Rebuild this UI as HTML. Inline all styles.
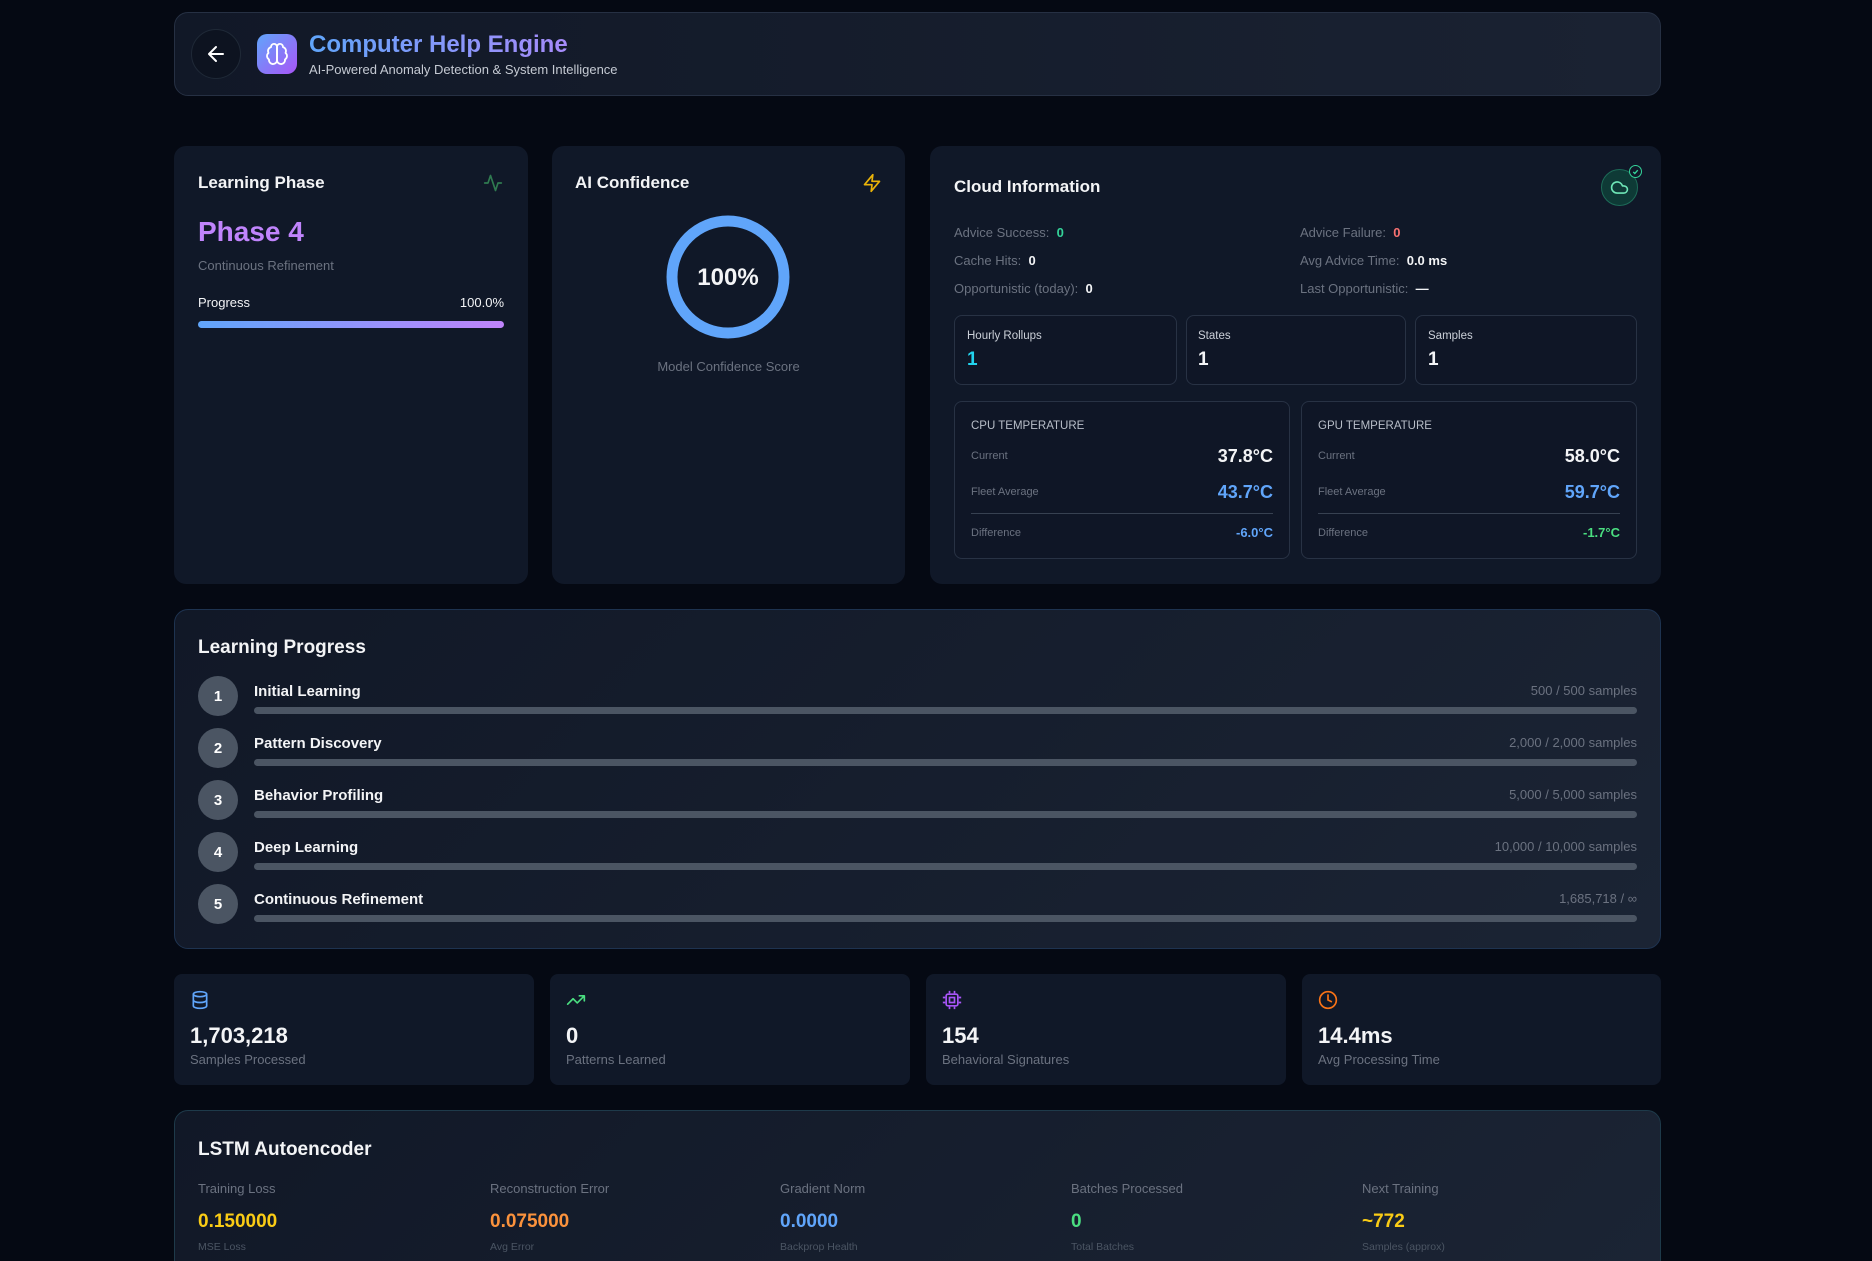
<!DOCTYPE html>
<html><head><meta charset="utf-8"><style>
*{box-sizing:border-box;margin:0;padding:0}
html{width:1872px;height:1261px;overflow:hidden;background:#050913}
body{width:1872px;height:1261px;overflow:hidden;background:#050913;font-family:"Liberation Sans",sans-serif;color:#f3f4f6;position:relative}
.a{position:absolute}
.card{position:absolute;background:#101828;border-radius:12px}
.t{position:absolute;white-space:nowrap;line-height:1}
.g{color:#6b7280}
.b{font-weight:700}
.mini{position:absolute;border:1px solid #283244;border-radius:8px;background:#0f1626}
.bar{position:absolute;height:7px;border-radius:4px;background:#4b5563}
.num{position:absolute;width:40px;height:40px;border-radius:50%;background:#4b5563;color:#fff;font-weight:700;font-size:15px;display:flex;align-items:center;justify-content:center}
</style></head><body>

<!-- header -->
<div class="a" style="left:174px;top:12px;width:1487px;height:84px;border-radius:14px;background:linear-gradient(90deg,#111827,#1a2232);border:1px solid #263043"></div>
<div class="a" style="left:191px;top:29px;width:50px;height:50px;border-radius:50%;border:1px solid #1f2937;background:#0d1320"></div>
<svg class="a" style="left:204px;top:42px" width="24" height="24" viewBox="0 0 24 24" fill="none" stroke="#fff" stroke-width="2" stroke-linecap="round" stroke-linejoin="round"><path d="M19 12H5M12 19l-7-7 7-7"/></svg>
<div class="a" style="left:257px;top:34px;width:40px;height:40px;border-radius:10px;background:linear-gradient(135deg,#60a5fa,#a855f7)"></div>
<svg class="a" style="left:265px;top:42px" width="24" height="24" viewBox="0 0 24 24" fill="none" stroke="#fff" stroke-width="1.8" stroke-linecap="round" stroke-linejoin="round"><path d="M12 5a3 3 0 1 0-5.99.13 4 4 0 0 0-2.53 5.77 4 4 0 0 0 .56 6.59A4 4 0 1 0 12 18z"/><path d="M12 5a3 3 0 1 1 5.99.13 4 4 0 0 1 2.53 5.77 4 4 0 0 1-.56 6.59A4 4 0 1 1 12 18z"/><path d="M12 5v13"/></svg>
<div class="t b" style="left:309px;top:33px;font-size:24px;background:linear-gradient(90deg,#60a5fa,#a78bfa);-webkit-background-clip:text;color:transparent">Computer Help Engine</div>
<div class="t" style="left:309px;top:63px;font-size:13px;color:#c5cad3">AI-Powered Anomaly Detection &amp; System Intelligence</div>

<!-- card 1 -->
<div class="card" style="left:174px;top:146px;width:354px;height:438px"></div>
<div class="t b" style="left:198px;top:174px;font-size:17px">Learning Phase</div>
<svg class="a" style="left:483px;top:173px" width="20" height="20" viewBox="0 0 24 24" fill="none" stroke="#2f7a50" stroke-width="2" stroke-linecap="round" stroke-linejoin="round"><path d="M22 12h-4l-3 9L9 3l-3 9H2"/></svg>
<div class="t b" style="left:198px;top:218px;font-size:28px;color:#c084fc">Phase 4</div>
<div class="t g" style="left:198px;top:259px;font-size:13px">Continuous Refinement</div>
<div class="t" style="left:198px;top:296px;font-size:13px">Progress</div>
<div class="t" style="right:1368px;top:296px;font-size:13px">100.0%</div>
<div class="a" style="left:198px;top:321px;width:306px;height:7px;border-radius:4px;background:linear-gradient(90deg,#60a5fa,#c084fc)"></div>

<!-- card 2 -->
<div class="card" style="left:552px;top:146px;width:353px;height:438px"></div>
<div class="t b" style="left:575px;top:174px;font-size:17px">AI Confidence</div>
<svg class="a" style="left:862px;top:172px" width="20" height="22" viewBox="0 0 24 24" fill="none" stroke="#eab308" stroke-width="2" stroke-linecap="round" stroke-linejoin="round"><path d="M13 2L3 14h9l-1 8 10-12h-9l1-8z"/></svg>
<svg class="a" style="left:664px;top:213px" width="128" height="128"><circle cx="64" cy="64" r="56" fill="none" stroke="#60a5fa" stroke-width="11"/></svg>
<div class="t b" style="left:664px;top:266px;width:128px;text-align:center;font-size:24px">100%</div>
<div class="t g" style="left:552px;top:360px;width:353px;text-align:center;font-size:13px">Model Confidence Score</div>

<!-- card 3 -->
<div class="card" style="left:930px;top:146px;width:731px;height:438px"></div>
<div class="t b" style="left:954px;top:178px;font-size:17px">Cloud Information</div>
<div class="a" style="left:1601px;top:169px;width:37px;height:37px;border-radius:50%;background:#0e3a36;border:1px solid #1d6b58"></div>
<svg class="a" style="left:1610px;top:178px" width="19" height="19" viewBox="0 0 24 24" fill="none" stroke="#6ee7b7" stroke-width="2" stroke-linecap="round" stroke-linejoin="round"><path d="M17.5 19H9a7 7 0 1 1 6.71-9h1.79a4.5 4.5 0 1 1 0 9z"/></svg>
<div class="a" style="left:1629px;top:165px;width:13px;height:13px;border-radius:50%;border:1.5px solid #34d399;background:#101828"></div>
<svg class="a" style="left:1631px;top:167px" width="9" height="9" viewBox="0 0 10 10" fill="none" stroke="#34d399" stroke-width="1.5"><path d="M2.5 5.5l1.7 1.7 3.3-3.7"/></svg>

<div class="t" style="left:954px;top:226px;font-size:13px"><span class="g">Advice Success:</span>&nbsp; <b style="color:#34d399">0</b></div>
<div class="t" style="left:954px;top:254px;font-size:13px"><span class="g">Cache Hits:</span>&nbsp; <b>0</b></div>
<div class="t" style="left:954px;top:282px;font-size:13px"><span class="g">Opportunistic (today):</span>&nbsp; <b>0</b></div>
<div class="t" style="left:1300px;top:226px;font-size:13px"><span class="g">Advice Failure:</span>&nbsp; <b style="color:#f87171">0</b></div>
<div class="t" style="left:1300px;top:254px;font-size:13px"><span class="g">Avg Advice Time:</span>&nbsp; <b>0.0 ms</b></div>
<div class="t" style="left:1300px;top:282px;font-size:13px"><span class="g">Last Opportunistic:</span>&nbsp; <b>—</b></div>

<div class="mini" style="left:954px;top:315px;width:223px;height:70px"></div>
<div class="mini" style="left:1186px;top:315px;width:220px;height:70px"></div>
<div class="mini" style="left:1415px;top:315px;width:222px;height:70px"></div>
<div class="t" style="left:967px;top:331px;font-size:11.5px;color:#cbd0d8">Hourly Rollups</div>
<div class="t b" style="left:967px;top:350px;font-size:19px;color:#22d3ee">1</div>
<div class="t" style="left:1198px;top:331px;font-size:11.5px;color:#cbd0d8">States</div>
<div class="t b" style="left:1198px;top:350px;font-size:19px">1</div>
<div class="t" style="left:1428px;top:331px;font-size:11.5px;color:#cbd0d8">Samples</div>
<div class="t b" style="left:1428px;top:350px;font-size:19px">1</div>

<div class="mini" style="left:954px;top:401px;width:336px;height:158px"></div>
<div class="mini" style="left:1301px;top:401px;width:336px;height:158px"></div>
<div class="t" style="left:971px;top:421px;font-size:11.5px;color:#b8bec8">CPU TEMPERATURE</div>
<div class="t g" style="left:971px;top:451px;font-size:11px">Current</div>
<div class="t b" style="right:599px;top:447px;font-size:18px">37.8°C</div>
<div class="t g" style="left:971px;top:487px;font-size:11px">Fleet Average</div>
<div class="t b" style="right:599px;top:483px;font-size:18px;color:#60a5fa">43.7°C</div>
<div class="a" style="left:971px;top:513px;width:302px;height:1px;background:#374151"></div>
<div class="t g" style="left:971px;top:528px;font-size:11px">Difference</div>
<div class="t b" style="right:599px;top:526px;font-size:13px;color:#60a5fa">-6.0°C</div>

<div class="t" style="left:1318px;top:421px;font-size:11.5px;color:#b8bec8">GPU TEMPERATURE</div>
<div class="t g" style="left:1318px;top:451px;font-size:11px">Current</div>
<div class="t b" style="right:252px;top:447px;font-size:18px">58.0°C</div>
<div class="t g" style="left:1318px;top:487px;font-size:11px">Fleet Average</div>
<div class="t b" style="right:252px;top:483px;font-size:18px;color:#60a5fa">59.7°C</div>
<div class="a" style="left:1318px;top:513px;width:302px;height:1px;background:#374151"></div>
<div class="t g" style="left:1318px;top:528px;font-size:11px">Difference</div>
<div class="t b" style="right:252px;top:526px;font-size:13px;color:#4ade80">-1.7°C</div>

<!-- learning progress -->
<div class="a" style="left:174px;top:609px;width:1487px;height:340px;border-radius:14px;background:linear-gradient(135deg,#111827,#1b2434);border:1px solid #1e3350"></div>
<div class="t b" style="left:198px;top:638px;font-size:19px">Learning Progress</div>

<div class="num" style="left:198px;top:676px">1</div>
<div class="t b" style="left:254px;top:684px;font-size:15px">Initial Learning</div>
<div class="t g" style="right:235px;top:684px;font-size:13px">500 / 500 samples</div>
<div class="bar" style="left:254px;top:707px;width:1383px"></div>

<div class="num" style="left:198px;top:728px">2</div>
<div class="t b" style="left:254px;top:736px;font-size:15px">Pattern Discovery</div>
<div class="t g" style="right:235px;top:736px;font-size:13px">2,000 / 2,000 samples</div>
<div class="bar" style="left:254px;top:759px;width:1383px"></div>

<div class="num" style="left:198px;top:780px">3</div>
<div class="t b" style="left:254px;top:788px;font-size:15px">Behavior Profiling</div>
<div class="t g" style="right:235px;top:788px;font-size:13px">5,000 / 5,000 samples</div>
<div class="bar" style="left:254px;top:811px;width:1383px"></div>

<div class="num" style="left:198px;top:832px">4</div>
<div class="t b" style="left:254px;top:840px;font-size:15px">Deep Learning</div>
<div class="t g" style="right:235px;top:840px;font-size:13px">10,000 / 10,000 samples</div>
<div class="bar" style="left:254px;top:863px;width:1383px"></div>

<div class="num" style="left:198px;top:884px">5</div>
<div class="t b" style="left:254px;top:892px;font-size:15px">Continuous Refinement</div>
<div class="t g" style="right:235px;top:892px;font-size:13px">1,685,718 / ∞</div>
<div class="bar" style="left:254px;top:915px;width:1383px"></div>

<!-- stat cards -->
<div class="card" style="left:174px;top:974px;width:360px;height:111px;border-radius:8px"></div>
<div class="card" style="left:550px;top:974px;width:360px;height:111px;border-radius:8px"></div>
<div class="card" style="left:926px;top:974px;width:360px;height:111px;border-radius:8px"></div>
<div class="card" style="left:1302px;top:974px;width:359px;height:111px;border-radius:8px"></div>
<svg class="a" style="left:190px;top:990px" width="20" height="20" viewBox="0 0 24 24" fill="none" stroke="#60a5fa" stroke-width="2"><ellipse cx="12" cy="5" rx="8" ry="3"/><path d="M4 5v14c0 1.7 3.6 3 8 3s8-1.3 8-3V5M4 12c0 1.7 3.6 3 8 3s8-1.3 8-3"/></svg>
<svg class="a" style="left:566px;top:990px" width="20" height="20" viewBox="0 0 24 24" fill="none" stroke="#4ade80" stroke-width="2" stroke-linecap="round" stroke-linejoin="round"><path d="M22 7l-8.5 8.5-5-5L2 17M16 7h6v6"/></svg>
<svg class="a" style="left:942px;top:990px" width="20" height="20" viewBox="0 0 24 24" fill="none" stroke="#a855f7" stroke-width="2"><rect x="5" y="5" width="14" height="14" rx="2"/><rect x="9" y="9" width="6" height="6"/><path d="M9 1v3M15 1v3M9 20v3M15 20v3M1 9h3M1 15h3M20 9h3M20 15h3"/></svg>
<svg class="a" style="left:1318px;top:990px" width="20" height="20" viewBox="0 0 24 24" fill="none" stroke="#f97316" stroke-width="2" stroke-linecap="round"><circle cx="12" cy="12" r="10"/><path d="M12 6v6l4 2"/></svg>
<div class="t b" style="left:190px;top:1025px;font-size:22px">1,703,218</div>
<div class="t g" style="left:190px;top:1053px;font-size:13px">Samples Processed</div>
<div class="t b" style="left:566px;top:1025px;font-size:22px">0</div>
<div class="t g" style="left:566px;top:1053px;font-size:13px">Patterns Learned</div>
<div class="t b" style="left:942px;top:1025px;font-size:22px">154</div>
<div class="t g" style="left:942px;top:1053px;font-size:13px">Behavioral Signatures</div>
<div class="t b" style="left:1318px;top:1025px;font-size:22px">14.4ms</div>
<div class="t g" style="left:1318px;top:1053px;font-size:13px">Avg Processing Time</div>

<!-- LSTM -->
<div class="a" style="left:174px;top:1110px;width:1487px;height:170px;border-radius:14px;background:linear-gradient(135deg,#111827,#1b2434);border:1px solid #1e3a4a"></div>
<div class="t b" style="left:198px;top:1140px;font-size:19px">LSTM Autoencoder</div>
<div class="t g" style="left:198px;top:1182px;font-size:13px">Training Loss</div>
<div class="t b" style="left:198px;top:1212px;font-size:19px;color:#facc15">0.150000</div>
<div class="t" style="left:198px;top:1242px;font-size:10.5px;color:#4b5563">MSE Loss</div>
<div class="t g" style="left:490px;top:1182px;font-size:13px">Reconstruction Error</div>
<div class="t b" style="left:490px;top:1212px;font-size:19px;color:#fb923c">0.075000</div>
<div class="t" style="left:490px;top:1242px;font-size:10.5px;color:#4b5563">Avg Error</div>
<div class="t g" style="left:780px;top:1182px;font-size:13px">Gradient Norm</div>
<div class="t b" style="left:780px;top:1212px;font-size:19px;color:#60a5fa">0.0000</div>
<div class="t" style="left:780px;top:1242px;font-size:10.5px;color:#4b5563">Backprop Health</div>
<div class="t g" style="left:1071px;top:1182px;font-size:13px">Batches Processed</div>
<div class="t b" style="left:1071px;top:1212px;font-size:19px;color:#4ade80">0</div>
<div class="t" style="left:1071px;top:1242px;font-size:10.5px;color:#4b5563">Total Batches</div>
<div class="t g" style="left:1362px;top:1182px;font-size:13px">Next Training</div>
<div class="t b" style="left:1362px;top:1212px;font-size:19px;color:#facc15">~772</div>
<div class="t" style="left:1362px;top:1242px;font-size:10.5px;color:#4b5563">Samples (approx)</div>
</body></html>
